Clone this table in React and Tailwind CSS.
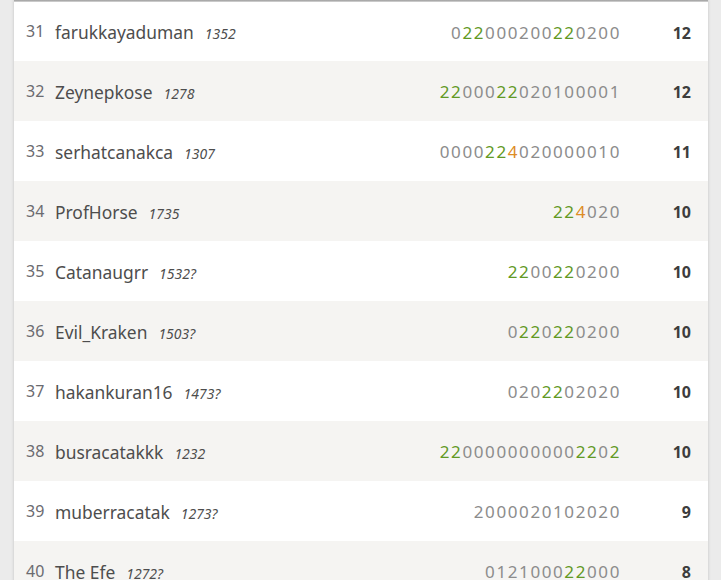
import React from 'react';

const players = [
  { rank: 31, name: 'farukkayaduman', rating: '1352', sheet: '022000200220200', total: 12 },
  { rank: 32, name: 'Zeynepkose', rating: '1278', sheet: '2200022020100001', total: 12 },
  { rank: 33, name: 'serhatcanakca', rating: '1307', sheet: '0000224020000010', total: 11 },
  { rank: 34, name: 'ProfHorse', rating: '1735', sheet: '224020', total: 10 },
  { rank: 35, name: 'Catanaugrr', rating: '1532?', sheet: '2200220200', total: 10 },
  { rank: 36, name: 'Evil_Kraken', rating: '1503?', sheet: '0220220200', total: 10 },
  { rank: 37, name: 'hakankuran16', rating: '1473?', sheet: '0202202020', total: 10 },
  { rank: 38, name: 'busracatakkk', rating: '1232', sheet: '2200000000002202', total: 10 },
  { rank: 39, name: 'muberracatak', rating: '1273?', sheet: '2000020102020', total: 9 },
  { rank: 40, name: 'The Efe', rating: '1272?', sheet: '012100022000', total: 8 },
];

// green = double points, orange = streak
const greens = {
  31: [1, 2, 9, 10],
  32: [0, 1, 5, 6],
  33: [4, 5],
  34: [0, 1],
  35: [0, 1, 4, 5],
  36: [1, 2, 4, 5],
  37: [3, 4],
  38: [0, 1, 12, 13, 15],
  39: [],
  40: [7, 8],
};
const oranges = { 33: [6], 34: [2] };

function Sheet({ rank, sheet }) {
  const g = greens[rank] || [];
  const o = oranges[rank] || [];
  return (
    <span className="text-[17px] tracking-[1.6px] text-[#8c8c8c]">
      {sheet.split('').map((d, i) => {
        if (o.includes(i)) return <span key={i} className="text-[#dd8c24]">{d}</span>;
        if (g.includes(i)) return <span key={i} className="text-[#629924]">{d}</span>;
        return <span key={i}>{d}</span>;
      })}
    </span>
  );
}

export default function App() {
  return (
    <div className="min-h-[580px] bg-[#ebebeb] pl-[14px] pr-[13px] overflow-hidden" style={{ fontFamily: '"Noto Sans", "Open Sans", sans-serif' }}>
      <div className="bg-white shadow-[0_0_3px_rgba(0,0,0,0.18)]">
        <div className="h-[2px] bg-gradient-to-b from-[#9a9a9a] to-[#d9d9d9]" />
        {players.map((p, idx) => (
          <div
            key={p.rank}
            className={`flex items-center pt-[2px] ${idx === 0 ? 'h-[59px]' : 'h-[60px]'} ${idx % 2 === 1 ? 'bg-[#f5f4f2]' : 'bg-white'}`}
          >
            <div className="w-[41px] pl-[12px] text-[16px] text-[#6b6b70] -mt-[3px] shrink-0">{p.rank}</div>
            <div className="flex items-baseline flex-1 min-w-0">
              <span className="text-[17.4px] text-[#4d4d4d]">{p.name}</span>
              <span className="ml-[11px] text-[14px] italic text-[#4d4d4d]">{p.rating}</span>
            </div>
            <div className="text-right pr-[18px]">
              <Sheet rank={p.rank} sheet={p.sheet} />
            </div>
            <div className="w-[69px] pr-[17px] text-right text-[16px] font-bold text-[#3d3d3d]">{p.total}</div>
          </div>
        ))}
      </div>
    </div>
  );
}
